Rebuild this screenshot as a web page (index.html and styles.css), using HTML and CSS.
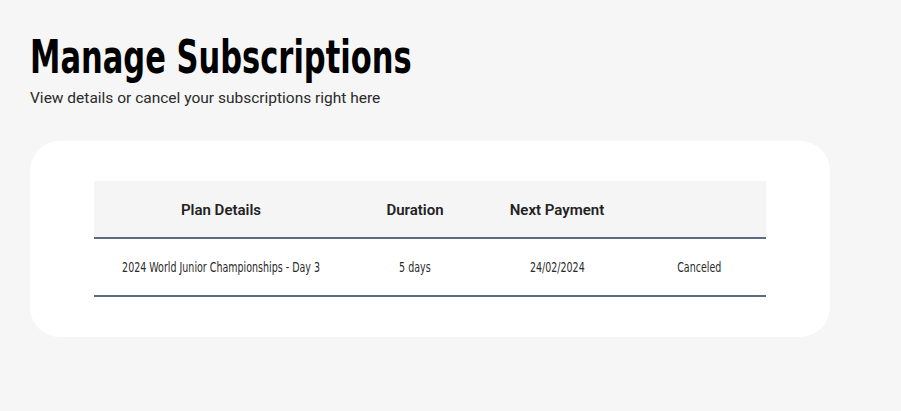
FILE: index.html
```html
<!DOCTYPE html>
<html lang="en">
<head>
<meta charset="utf-8">
<title>Manage Subscriptions</title>
<link rel="stylesheet" href="styles.css">
</head>
<body>
<main class="page">
  <header class="intro">
    <h1 class="title"><span class="title-text">Manage Subscriptions</span></h1>
    <p class="subtitle">View details or cancel your subscriptions right here</p>
  </header>
  <section class="card">
    <table class="subs">
      <colgroup>
        <col class="c1"><col class="c2"><col class="c3"><col class="c4">
      </colgroup>
      <thead>
        <tr>
          <th>Plan Details</th>
          <th>Duration</th>
          <th>Next Payment</th>
          <th></th>
        </tr>
      </thead>
      <tbody>
        <tr>
          <td><div class="cell"><span class="narrow">2024 World Junior Championships - Day 3</span></div></td>
          <td><div class="cell"><span class="narrow">5 days</span></div></td>
          <td><div class="cell"><span class="narrow">24/02/2024</span></div></td>
          <td><div class="cell"><span class="narrow">Canceled</span></div></td>
        </tr>
      </tbody>
    </table>
  </section>
</main>
</body>
</html>
```
FILE: styles.css
```css
* { box-sizing: border-box; }
html, body { margin: 0; padding: 0; }
body {
  background: #f6f6f6;
  color: #222;
  font-family: "Roboto", "Liberation Sans", sans-serif;
}
.page {
  padding: 30px 30px 0 30px;
}
.intro {
  display: flex;
  flex-direction: column;
}
.title {
  margin: 0;
  font-family: "DejaVu Sans Condensed", "DejaVu Sans", sans-serif;
  font-weight: 700;
  font-size: 47px;
  line-height: 54px;
  color: #000;
  white-space: nowrap;
}
.title-text {
  display: inline-block;
  transform: scaleX(0.722);
  transform-origin: left center;
}
.subtitle {
  margin: 4px 0 0 0;
  font-size: 15.5px;
  line-height: 20px;
  color: #2a2a2a;
}
.card {
  margin-top: 33px;
  width: 800px;
  background: #fff;
  border-radius: 30px;
  padding: 40px 64px;
}
.subs {
  width: 672px;
  border-collapse: collapse;
  table-layout: fixed;
}
.c1 { width: 254px; }
.c2 { width: 134px; }
.c3 { width: 150px; }
.c4 { width: 134px; }
.subs th {
  background: #f5f5f5;
  height: 57px;
  font-weight: 600;
  font-size: 15px;
  color: #222;
  text-align: center;
  border-bottom: 2px solid #5f6b85;
  padding: 2px 0 0 0;
}
.subs td {
  height: 58px;
  font-family: "DejaVu Sans Condensed", "DejaVu Sans", sans-serif;
  font-size: 14px;
  color: #2a2a2a;
  border-bottom: 2px solid #5f6b85;
  padding: 0;
  white-space: nowrap;
}
.cell {
  display: flex;
  justify-content: center;
  align-items: center;
}
.narrow {
  display: inline-block;
  transform: scaleX(0.755);
  transform-origin: center center;
}
```
